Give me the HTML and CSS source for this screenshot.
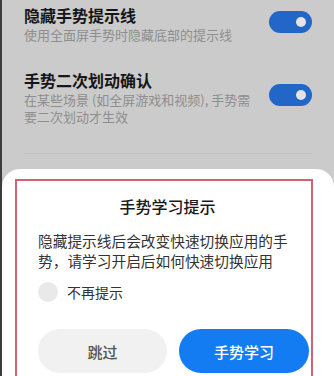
FILE: index.html
```html
<!DOCTYPE html>
<html lang="zh">
<head>
<meta charset="utf-8">
<link rel="stylesheet" href="styles.css">
</head>
<body>
<div class="screen">
  <div class="settings">
    <div class="item item-first">
      <div class="text">
        <div class="title">隐藏手势提示线</div>
        <div class="sub">使用全面屏手势时隐藏底部的提示线</div>
      </div>
      <div class="toggle"><span class="knob"></span></div>
    </div>
    <div class="item item-second">
      <div class="text">
        <div class="title">手势二次划动确认</div>
        <div class="sub">在某些场景 (如全屏游戏和视频), 手势需要二次划动才生效</div>
      </div>
      <div class="toggle"><span class="knob"></span></div>
    </div>
    <div class="divider"></div>
  </div>
  <div class="sheet">
    <div class="highlight">
      <div class="dlg-title">手势学习提示</div>
      <div class="dlg-body">隐藏提示线后会改变快速切换应用的手势，请学习开启后如何快速切换应用</div>
      <div class="check-row">
        <span class="check"></span>
        <span class="check-label">不再提示</span>
      </div>
      <div class="buttons">
        <div class="btn btn-skip">跳过</div>
        <div class="btn btn-primary">手势学习</div>
      </div>
    </div>
  </div>
</div>
</body>
</html>
```
FILE: styles.css
```css
html, body {
  margin: 0;
  padding: 0;
}
body {
  width: 334px;
  height: 376px;
  overflow: hidden;
  font-family: "Noto Sans CJK SC", "Noto Sans", sans-serif;
}
.screen {
  box-sizing: border-box;
  width: 334px;
  height: 376px;
  background: #cbcbcb;
  border-left: 2px solid #3c3c3c;
  display: flex;
  flex-direction: column;
}
.settings {
  padding: 4px 22px 0 22px;
}
.item {
  display: flex;
  justify-content: space-between;
  align-items: center;
}
.item-second {
  margin-top: 26px;
}
.text {
  max-width: 236px;
}
.title {
  font-size: 16px;
  line-height: 22px;
  font-weight: 700;
  color: #161616;
}
.sub {
  font-size: 13px;
  line-height: 17px;
  color: #8e8e8e;
}
.toggle {
  width: 43px;
  height: 22px;
  border-radius: 11px;
  background: #2266c8;
  display: flex;
  align-items: center;
  justify-content: flex-end;
  padding-right: 6px;
  box-sizing: border-box;
}
.item-first .toggle {
  margin-top: -3px;
}
.item-second .toggle {
  margin-top: -5px;
}
.knob {
  width: 10px;
  height: 10px;
  border-radius: 50%;
  background: #e4e4e4;
}
.divider {
  height: 1px;
  background: #c2c2c2;
  margin-top: 28px;
}
.sheet {
  flex: 1;
  margin-top: 15px;
  background: #ffffff;
  border-radius: 18px 18px 0 0;
  padding: 10px 21px 0 13px;
}
.highlight {
  border: 2px solid #cf6470;
  border-bottom: none;
  height: 100%;
  box-sizing: border-box;
  padding: 14px 2px 0 21px;
}
.dlg-title {
  text-align: center;
  font-size: 16px;
  line-height: 22px;
  font-weight: 500;
  color: #1a1a1a;
  padding-right: 12px;
}
.dlg-body {
  margin-top: 14px;
  max-width: 256px;
  font-size: 14.7px;
  line-height: 19.5px;
  color: #333333;
}
.check-row {
  margin-top: 11px;
  display: flex;
  align-items: center;
  height: 22px;
}
.check {
  width: 20px;
  height: 20px;
  border-radius: 50%;
  background: #e9e9e9;
}
.check-label {
  margin-left: 9px;
  font-size: 14px;
  color: #333333;
}
.buttons {
  margin-top: 26px;
  display: flex;
  gap: 12px;
}
.btn {
  height: 44px;
  border-radius: 22px;
  display: flex;
  align-items: center;
  justify-content: center;
  font-size: 15px;
  font-weight: 500;
}
.btn-skip {
  width: 129px;
  background: #f1f1f1;
  color: #555555;
}
.btn-primary {
  width: 130px;
  background: #137cf2;
  color: #ffffff;
}
```
